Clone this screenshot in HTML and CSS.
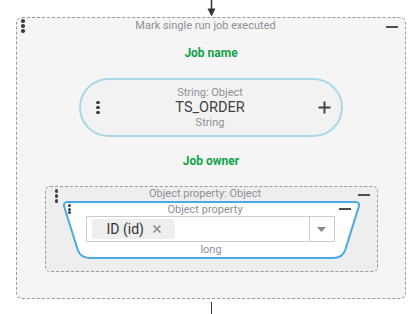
FILE: index.html
```html
<!DOCTYPE html>
<html>
  <head>
    <title>Mark single run job executed</title>
    <link rel="stylesheet" href="styles.css">
  </head>

  <body>
    <div class="canvas">
      <svg class="link-in" width="9" height="17" viewBox="0 0 9 17">
        <line x1="4.5" y1="0" x2="4.5" y2="10" stroke="#333" stroke-width="1.5" />
        <polygon points="0.5,8.5 8.5,8.5 4.5,16.5" fill="#333" />
      </svg>

      <div class="block">
        <div class="block-head">
          <span class="dots"><i></i><i></i><i></i></span>
          <div class="block-title">Mark single run job executed</div>
          <span class="minus"></span>
        </div>

        <div class="block-body">
          <div class="arg-label">Job name</div>

          <div class="pill">
            <span class="dots"><i></i><i></i><i></i></span>
            <div class="pill-text">
              <div class="sub">String: Object</div>
              <div class="value">TS_ORDER</div>
              <div class="sub">String</div>
            </div>
            <svg class="plus" width="13" height="13" viewBox="0 0 13 13">
              <path d="M6.5 0.5V12.5M0.5 6.5H12.5" stroke="#444" stroke-width="2" />
            </svg>
          </div>

          <div class="arg-label owner">Job owner</div>

          <div class="group">
            <div class="group-head">
              <span class="dots"><i></i><i></i><i></i></span>
              <div class="group-title">Object property: Object</div>
              <span class="minus"></span>
            </div>

            <div class="trap">
              <svg class="trap-shape" width="299" height="58" viewBox="0 0 299 58">
                <path d="M6 1H293Q298.5 1 296.6 6.2L283.4 48.5Q280.6 57 271 57H28Q18.4 57 15.6 48.5L2.4 6.2Q0.5 1 6 1Z"
                      fill="#fff" stroke="#4aa9e2" stroke-width="2" />
              </svg>
              <div class="trap-head">
                <span class="dots small"><i></i><i></i><i></i></span>
                <div class="trap-title">Object property</div>
                <span class="minus"></span>
              </div>
              <div class="select">
                <div class="select-values">
                  <span class="chip">
                    ID (id)
                    <svg width="8" height="8" viewBox="0 0 8 8">
                      <path d="M0.5 0.5L7.5 7.5M7.5 0.5L0.5 7.5" stroke="#888" stroke-width="1.5" />
                    </svg>
                  </span>
                </div>
                <div class="select-toggle">
                  <svg width="9" height="5" viewBox="0 0 9 5">
                    <polygon points="0,0 9,0 4.5,5" fill="#888" />
                  </svg>
                </div>
              </div>
              <div class="trap-type">long</div>
            </div>
          </div>
        </div>
      </div>

      <div class="link-out"></div>
    </div>
  </body>
</html>
```

FILE: styles.css
```css
body {
  margin: 0;
  font-family: Roboto, "Liberation Sans", sans-serif;
  background-color: #fff;
  color: #333;
}

.canvas {
  width: 418px;
  height: 314px;
  display: flex;
  flex-direction: column;
  overflow: hidden;
}

.link-in {
  display: block;
  margin-left: 207px;
}

.link-out {
  width: 1px;
  height: 12px;
  margin: 3px 0 0 211px;
  background-color: #333;
}

/* shared bits */

.dots {
  display: flex;
  flex-direction: column;
  gap: 1.5px;
  width: 4px;
  flex: none;
}

.dots i {
  display: block;
  width: 3.5px;
  height: 3.5px;
  border-radius: 50%;
  background-color: #3c4043;
}

.dots.small {
  gap: 0.8px;
}

.dots.small i {
  width: 3px;
  height: 3px;
}

.minus {
  display: block;
  width: 12px;
  height: 2px;
  background-color: #4a4f55;
  flex: none;
}

/* outer block */

.block {
  box-sizing: border-box;
  width: 390px;
  height: 282px;
  margin-left: 16px;
  border: 1px dashed #9a9a9a;
  border-radius: 6px;
  background-color: #f5f5f5;
}

.block-head {
  display: flex;
  align-items: center;
  height: 14px;
  margin-top: 1px;
  padding: 0 7px 0 4px;
}

.block-title {
  flex: 1;
  text-align: center;
  font-size: 11px;
  line-height: 14px;
  color: #8c9095;
}

.block-head .minus {
  margin-top: 2px;
}

.block-body {
  display: flex;
  flex-direction: column;
  align-items: center;
}

.arg-label {
  margin-top: 12px;
  font-size: 12px;
  line-height: 16px;
  font-weight: bold;
  color: #12a24a;
}

.arg-label.owner {
  margin-top: 16px;
}

/* string value pill */

.pill {
  box-sizing: border-box;
  display: flex;
  align-items: center;
  width: 264px;
  height: 59px;
  margin-top: 17px;
  padding: 0 10px 0 15px;
  border: 2px solid #a8d7e8;
  border-radius: 30px;
  background-color: #f2f2f2;
}

.pill-text {
  flex: 1;
  text-align: center;
  padding-left: 2px;
}

.pill-text .sub {
  font-size: 11px;
  line-height: 13px;
  color: #8c9095;
}

.pill-text .value {
  font-size: 14.5px;
  line-height: 17px;
  color: #3c4043;
}

.plus {
  display: block;
  flex: none;
}

/* object property group */

.group {
  box-sizing: border-box;
  width: 333px;
  height: 86px;
  margin-top: 17px;
  border: 1px dashed #9a9a9a;
  border-radius: 5px;
  background-color: #eeeeee;
  display: flex;
  flex-direction: column;
  align-items: center;
}

.group-head {
  align-self: stretch;
  display: flex;
  align-items: flex-start;
  height: 14px;
  padding: 0 7px 0 9px;
}

.group-head .dots {
  margin-top: 2px;
}

.group-head .minus {
  margin-top: 7px;
}

.group-title {
  flex: 1;
  text-align: center;
  font-size: 11px;
  line-height: 13px;
  color: #8c9095;
  padding-right: 6px;
}

.trap {
  position: relative;
  width: 299px;
  height: 58px;
}

.trap-shape {
  position: absolute;
  top: 0;
  left: 0;
}

.trap-head,
.select,
.trap-type {
  position: relative;
}

.trap-head {
  display: flex;
  align-items: center;
  height: 14px;
  padding: 1px 10px 0 6px;
}

.trap-head .dots {
  margin-top: 0;
}

.trap-title {
  flex: 1;
  text-align: center;
  font-size: 11px;
  line-height: 13px;
  color: #8c9095;
}

.select {
  box-sizing: border-box;
  display: flex;
  width: 249px;
  height: 26px;
  margin-left: 24px;
  border: 1px solid #cccccc;
  background-color: #fff;
}

.select-values {
  flex: 1;
  padding: 2px 0 0 5px;
}

.chip {
  display: inline-flex;
  align-items: center;
  gap: 9px;
  height: 20px;
  padding: 0 14px 0 15px;
  border-radius: 3px;
  background-color: #eeeeee;
  font-size: 14px;
  color: #333;
}

.select-toggle {
  width: 24px;
  border-left: 1px solid #cccccc;
  display: flex;
  align-items: center;
  justify-content: center;
}

.trap-type {
  text-align: center;
  font-size: 11px;
  line-height: 13px;
  margin-top: 1px;
  color: #8c9095;
}
```
